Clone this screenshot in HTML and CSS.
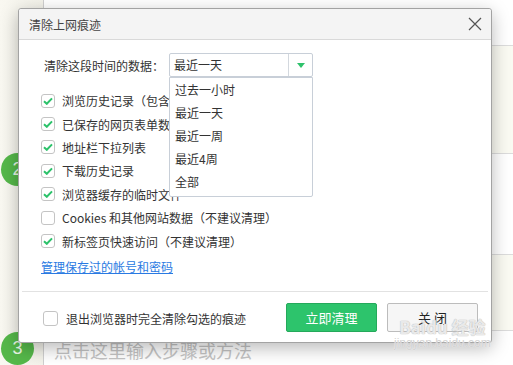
FILE: index.html
```html
<!DOCTYPE html>
<html lang="zh-CN">
<head>
  <meta charset="UTF-8">
  <title>清除上网痕迹</title>
  <link rel="stylesheet" href="styles.css">
</head>
<body>
  <div class="page">
    <div class="gutter">
      <span class="step step-2">2</span>
      <span class="step step-3">3</span>
    </div>
    <div class="main">
      <div class="band band-top"></div>
      <div class="band band-a"></div>
      <div class="band band-b"></div>
      <div class="band band-a band-short"></div>
      <div class="band band-last">点击这里输入步骤或方法</div>
    </div>
  </div>

  <div class="dlg">
    <div class="dlg-head">
      <span class="dlg-title">清除上网痕迹</span>
      <svg class="dlg-close" width="14" height="14" viewBox="0 0 14 14">
        <path d="M1 1L13 13M13 1L1 13" stroke="#555" stroke-width="1.2" fill="none"/>
      </svg>
    </div>

    <div class="dlg-body">
      <div class="range">
        <span class="range-label">清除这段时间的数据：</span>
        <div class="select">
          <span class="select-value">最近一天</span>
          <span class="select-btn">
            <svg width="8" height="5" viewBox="0 0 8 5"><path d="M0 0H8L4 5Z" fill="#2dc26b"/></svg>
          </span>
          <ul class="select-list">
            <li>过去一小时</li>
            <li>最近一天</li>
            <li>最近一周</li>
            <li>最近4周</li>
            <li>全部</li>
          </ul>
        </div>
      </div>

      <ul class="checks">
        <li><span class="cb on"></span>浏览历史记录（包含浏览记录和下载记录）</li>
        <li><span class="cb on"></span>已保存的网页表单数据</li>
        <li><span class="cb on"></span>地址栏下拉列表</li>
        <li><span class="cb on"></span>下载历史记录</li>
        <li><span class="cb on"></span>浏览器缓存的临时文件</li>
        <li><span class="cb"></span>Cookies 和其他网站数据（不建议清理）</li>
        <li><span class="cb on"></span>新标签页快速访问（不建议清理）</li>
      </ul>

      <a class="manage" href="#">管理保存过的帐号和密码</a>
    </div>

    <div class="dlg-foot">
      <label class="exit-opt"><span class="cb"></span>退出浏览器时完全清除勾选的痕迹</label>
      <button class="btn btn-primary" type="button">立即清理</button>
      <button class="btn" type="button">关 闭</button>
    </div>
  </div>

  <div class="watermark">
    <span class="wm-logo">Baidu 经验</span>
    <span class="wm-url">jingyan.baidu.com</span>
  </div>
</body>
</html>
```

FILE: styles.css
```css
body {
  margin: 0;
  width: 513px;
  height: 365px;
  overflow: hidden;
  font-family: "Noto Sans CJK SC", "Liberation Sans", sans-serif;
  font-size: 12px;
  color: #333;
  background: #fff;
}
ul {
  margin: 0;
  padding: 0;
  list-style: none;
}

/* page behind the dialog */
.page {
  display: flex;
  height: 365px;
}
.gutter {
  width: 44px;
  flex: none;
  background: linear-gradient(to right, #f9f8f1, #f3f2ea);
  border-right: 1px solid #cfcfcf;
  display: flex;
  flex-direction: column;
  padding: 153px 0 0 1px;
  box-sizing: border-box;
}
.step {
  width: 33px;
  height: 33px;
  border-radius: 50%;
  background: #55b84a;
  color: #e9f6e5;
  font-size: 18px;
  line-height: 33px;
  text-align: center;
  font-family: "Liberation Sans", sans-serif;
}
.step-3 {
  margin-top: 146px;
}
.main {
  flex: 1;
  display: flex;
  flex-direction: column;
}
.band {
  border-bottom: 1px solid #dcdcdc;
}
.band-top {
  height: 45px;
}
.band-a {
  height: 107px;
  background: #fafaf2;
}
.band-b {
  height: 100px;
}
.band-short {
  height: 75px;
}
.band-last {
  border-bottom: none;
  flex: 1;
  padding: 6px 0 0 10px;
  font-size: 18px;
  color: #c4c4c4;
}

/* dialog */
.dlg {
  position: absolute;
  left: 18px;
  top: 8px;
  width: 474px;
  height: 335px;
  box-sizing: border-box;
  background: #fff;
  border: 1px solid #a3a3a3;
  border-radius: 3px;
  box-shadow: 0 5px 18px rgba(0, 0, 0, 0.28);
  display: flex;
  flex-direction: column;
}
.dlg-head {
  height: 30px;
  flex: none;
  background: #f4f4f4;
  border-bottom: 1px solid #d9d9d9;
  border-radius: 3px 3px 0 0;
  display: flex;
  align-items: center;
  justify-content: space-between;
  padding: 0 9px 0 10px;
}
.dlg-title {
  color: #444;
}
.dlg-body {
  flex: 1;
  padding: 13px 0 0 22px;
}
.range {
  display: flex;
  align-items: center;
  padding-left: 3px;
}
.range-label {
  width: 125px;
}
.select {
  position: relative;
  width: 144px;
  height: 24px;
  box-sizing: border-box;
  border: 1px solid #c8cfd8;
  border-radius: 2px;
  display: flex;
}
.select-value {
  flex: 1;
  padding-left: 4px;
  line-height: 22px;
}
.select-btn {
  width: 23px;
  border-left: 1px solid #d3d8de;
  display: flex;
  align-items: center;
  justify-content: center;
}
.select-list {
  position: absolute;
  left: -1px;
  top: 23px;
  width: 144px;
  box-sizing: border-box;
  border: 1px solid #c8cfd8;
  border-radius: 0 0 2px 2px;
  background: #fff;
  padding: 0 0 3px;
  z-index: 2;
}
.select-list li {
  height: 23px;
  line-height: 23px;
  padding-left: 5px;
}
.checks {
  margin-top: 12px;
}
.checks li {
  height: 23.4px;
  display: flex;
  align-items: center;
  white-space: nowrap;
}
.cb {
  width: 12px;
  height: 12px;
  flex: none;
  border: 1px solid #c4c4c4;
  border-radius: 3px;
  margin-right: 7px;
  background: #fff no-repeat center;
}
.cb.on {
  background-image: url("data:image/svg+xml,%3Csvg xmlns='http://www.w3.org/2000/svg' width='10' height='8' viewBox='0 0 10 8'%3E%3Cpath d='M1 4.2L3.8 6.8L9 1.4' stroke='%232dc26b' stroke-width='2' fill='none'/%3E%3C/svg%3E");
}
.manage {
  display: inline-block;
  margin-top: 5px;
  color: #2a7ae2;
}

.dlg-foot {
  height: 50px;
  flex: none;
  margin: 0 3px;
  border-top: 1px solid #e2e2e2;
  display: flex;
  align-items: center;
  padding: 0 10px 0 21px;
}
.exit-opt {
  flex: 1;
  display: flex;
  align-items: center;
  margin-top: 2px;
}
.exit-opt .cb {
  width: 13px;
  height: 13px;
  margin-right: 8px;
}
.btn {
  width: 91px;
  height: 29px;
  margin-left: 10px;
  font-family: inherit;
  font-size: 13px;
  color: #222;
  background: #f6f6f6;
  border: 1px solid #bcbcbc;
  border-radius: 2px;
}
.btn-primary {
  margin-left: 0;
  color: #fff;
  background: #2dc46c;
  border-color: #25a95b;
}

/* watermark */
.watermark {
  position: absolute;
  left: 394px;
  top: 318px;
  display: flex;
  flex-direction: column;
  align-items: center;
  pointer-events: none;
}
.wm-logo {
  font-size: 17px;
  font-weight: bold;
  line-height: 18px;
  color: rgba(255, 255, 255, 0.7);
  text-shadow: 0 0 1px #bbb, 0 0 1px #bbb;
}
.wm-url {
  font-family: "Liberation Sans", sans-serif;
  font-size: 12px;
  color: #d2d2d2;
  text-shadow: 0 0 1px #fff;
}
```
